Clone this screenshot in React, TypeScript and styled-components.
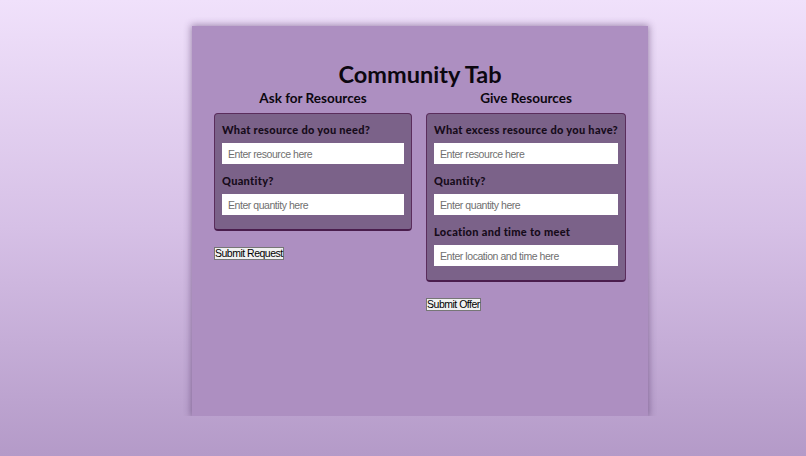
import React from 'react'
import styled, { createGlobalStyle } from 'styled-components'

const GlobalStyle = createGlobalStyle`
  html, body {
    margin: 0;
    padding: 0;
    height: 100%;
  }
  body {
    background: linear-gradient(180deg, #f0e1fb 0%, #d6c0e6 50%, #b49ac8 100%) fixed;
    font-family: Lato, "Open Sans", sans-serif;
  }
`

const Page = styled.div`
  height: 456px;
  display: flex;
  flex-direction: column;
  align-items: flex-start;
  overflow: hidden;
`

const Panel = styled.main`
  margin: 26px 0 0 192px;
  width: 456px;
  height: 390px;
  flex-shrink: 0;
  box-sizing: border-box;
  background-color: #ad8fc1;
  box-shadow: 0 0 7px 1px rgba(60, 30, 80, 0.45);
  padding: 33px 22px 0;
`

// strip below the panel that hides its bottom shadow
const Footer = styled.div`
  position: relative;
  z-index: 1;
  width: 100%;
  flex: 1;
  background: linear-gradient(180deg, #f0e1fb 0%, #d6c0e6 50%, #b49ac8 100%) fixed;
`

const Title = styled.h1`
  margin: 0;
  text-align: center;
  font-size: 23.5px;
  font-weight: 700;
  line-height: 30px;
  color: #0c0710;
`

const Columns = styled.div`
  display: grid;
  grid-template-columns: 1fr 1fr;
  column-gap: 14px;
  align-items: start;
`

const Column = styled.section`
  display: flex;
  flex-direction: column;
  align-items: flex-start;
`

const ColumnHeading = styled.h2`
  margin: 0 0 6px;
  align-self: stretch;
  text-align: center;
  font-size: 13.5px;
  font-weight: 700;
  line-height: 18px;
  color: #0c0710;
`

const Card = styled.div`
  align-self: stretch;
  box-sizing: border-box;
  background-color: #7b6289;
  border: 1px solid #5a2d5c;
  border-bottom: 2px solid #4a1d4d;
  border-radius: 4px;
  padding: 8px 7px 14px;
  display: flex;
  flex-direction: column;
`

const Label = styled.label`
  font-size: 11px;
  font-weight: 900;
  letter-spacing: 0.3px;
  line-height: 14px;
  white-space: nowrap;
  color: #160b1a;
  margin: 1px 0 6px;
`

const Field = styled.input`
  box-sizing: border-box;
  width: 100%;
  height: 21px;
  border: none;
  outline: none;
  background: #ffffff;
  padding: 0 6px;
  font-family: "Liberation Sans", Arial, sans-serif;
  font-size: 10.5px;
  letter-spacing: -0.45px;
  color: #333;
  margin-bottom: 9px;

  &:last-child {
    margin-bottom: 0;
  }

  &::placeholder {
    color: #6f6f6f;
  }
`

const SubmitButton = styled.button`
  margin-top: 16px;
  padding: 0;
  height: 13px;
  font-family: "Liberation Sans", Arial, sans-serif;
  font-size: 10.5px;
  letter-spacing: -0.5px;
  line-height: 11px;
  color: #000;
  background: #f0f0f0;
  border: 1px solid #767676;
  border-radius: 0;
`

export default function App() {
  return (
    <>
      <GlobalStyle />
      <Page>
        <Panel>
          <Title>Community Tab</Title>
          <Columns>
            <Column>
              <ColumnHeading>Ask for Resources</ColumnHeading>
              <Card>
                <Label>What resource do you need?</Label>
                <Field placeholder="Enter resource here" />
                <Label>Quantity?</Label>
                <Field placeholder="Enter quantity here" />
              </Card>
              <SubmitButton>Submit Request</SubmitButton>
            </Column>
            <Column>
              <ColumnHeading>Give Resources</ColumnHeading>
              <Card>
                <Label>What excess resource do you have?</Label>
                <Field placeholder="Enter resource here" />
                <Label>Quantity?</Label>
                <Field placeholder="Enter quantity here" />
                <Label>Location and time to meet</Label>
                <Field placeholder="Enter location and time here" />
              </Card>
              <SubmitButton>Submit Offer</SubmitButton>
            </Column>
          </Columns>
        </Panel>
        <Footer />
      </Page>
    </>
  )
}
